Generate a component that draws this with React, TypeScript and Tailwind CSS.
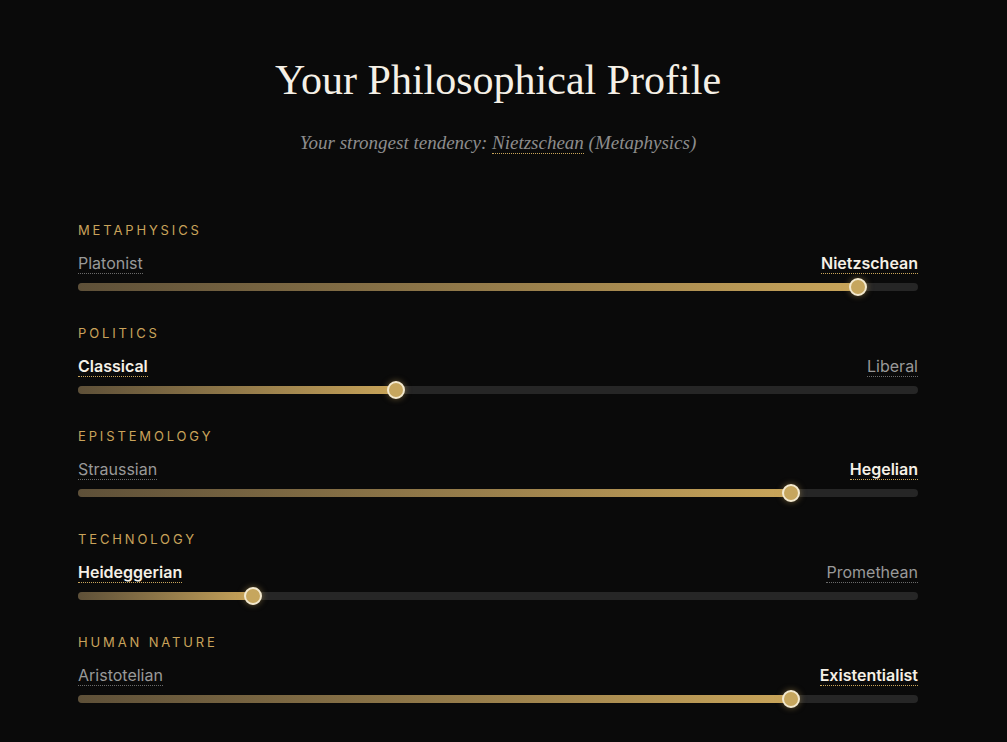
import React from "react";

type Axis = { name: string; left: string; right: string; value: number; active: "left" | "right" };

const axes: Axis[] = [
  { name: "Metaphysics", left: "Platonist", right: "Nietzschean", value: 92.9, active: "right" },
  { name: "Politics", left: "Classical", right: "Liberal", value: 37.9, active: "left" },
  { name: "Epistemology", left: "Straussian", right: "Hegelian", value: 84.9, active: "right" },
  { name: "Technology", left: "Heideggerian", right: "Promethean", value: 20.8, active: "left" },
  { name: "Human Nature", left: "Aristotelian", right: "Existentialist", value: 84.9, active: "right" },
];

function Pole({ text, active }: { text: string; active: boolean }) {
  return (
    <span
      className={
        active
          ? "text-[16px] font-semibold text-[#f5f0e6] border-b border-dotted border-[#c9a55a] leading-[19px]"
          : "text-[16px] text-[#999999] border-b border-dotted border-[#6a6a6a] leading-[19px]"
      }
    >
      {text}
    </span>
  );
}

function Row({ a }: { a: Axis }) {
  return (
    <div className="flex flex-col">
      <div className="text-[13px] uppercase tracking-[0.22em] text-[#c9a35a] leading-[16px]">{a.name}</div>
      <div className="flex justify-between items-end mt-[16px]">
        <Pole text={a.left} active={a.active === "left"} />
        <Pole text={a.right} active={a.active === "right"} />
      </div>
      <div className="relative h-[8px] mt-[9px] rounded-full bg-[#262626]">
        <div
          className="h-full rounded-full bg-gradient-to-r from-[#5e5038] to-[#c9a55a]"
          style={{ width: `${a.value}%` }}
        />
        <div
          className="absolute top-1/2 w-[18px] h-[18px] -translate-x-1/2 -translate-y-1/2 rounded-full bg-[#c6a65e] border-2 border-[#f3e9cf] shadow-[0_0_6px_rgba(201,165,90,0.5)]"
          style={{ left: `${a.value}%` }}
        />
      </div>
    </div>
  );
}

export default function App() {
  return (
    <div className="min-h-[742px] bg-[#0a0a0a] font-['Inter',sans-serif] pl-[78px]">
      <div className="w-[840px] pt-[55px]">
        <h1 className="text-center font-['Liberation_Serif',serif] text-[42px] leading-[50px] text-[#f5f0e6]">
          Your Philosophical Profile
        </h1>
        <p className="text-center mt-[26px] font-['Liberation_Serif',serif] italic text-[19px] leading-[24px] text-[#8d8d8d]">
          Your strongest tendency:{" "}
          <span className="border-b border-dotted border-[#c9a55a]">Nietzschean</span> (Metaphysics)
        </p>
        <div className="mt-[67px] flex flex-col gap-[34px]">
          {axes.map((a) => (
            <Row key={a.name} a={a} />
          ))}
        </div>
      </div>
    </div>
  );
}
